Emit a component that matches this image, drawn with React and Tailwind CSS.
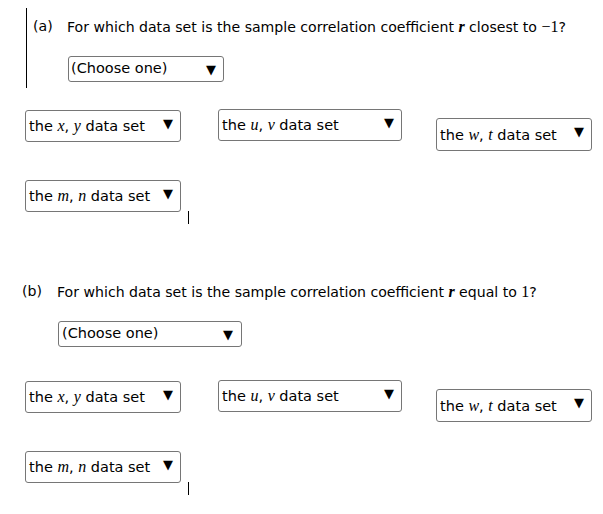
import React from "react";

const M = ({ children, bold }) => (
  <span
    className={`font-['Liberation_Serif',serif] italic text-[16px] ${bold ? "font-bold" : ""}`}
  >
    {children}
  </span>
);

const N = ({ children }) => (
  <span className="font-['Liberation_Serif',serif] text-[16px]">{children}</span>
);

const Arrow = ({ className = "" }) => (
  <span className={`text-[13px] leading-none text-black ${className}`}>▼</span>
);

const Pick = ({ w, h, arrowTop, label, className = "" }) => (
  <div
    className={`flex items-center justify-between border border-[#767676] rounded-[3px] bg-white pl-[3px] pr-[7px] ${w} ${h} ${className}`}
  >
    <span className="leading-[20px] whitespace-nowrap">{label}</span>
    <Arrow className={arrowTop ? "self-start mt-[6px]" : ""} />
  </div>
);

const Choices = () => (
  <>
    <div className="flex items-start">
      <Pick
        w="w-[156px]"
        h="h-[32px]"
        arrowTop
        className="mt-[1px]"
        label={
          <>
            the <M>x</M>, <M>y</M> data set
          </>
        }
      />
      <Pick
        w="w-[184px]"
        h="h-[32px]"
        arrowTop
        className="ml-[37px]"
        label={
          <>
            the <M>u</M>, <M>v</M> data set
          </>
        }
      />
      <Pick
        w="w-[156px]"
        h="h-[33px]"
        arrowTop
        className="ml-[34px] mt-[9px]"
        label={
          <>
            the <M>w</M>, <M>t</M> data set
          </>
        }
      />
    </div>
    <div className="flex items-end mt-[29px]">
      <Pick
        w="w-[156px]"
        h="h-[32px]"
        arrowTop
        label={
          <>
            the <M>m</M>, <M>n</M> data set
          </>
        }
      />
      <div className="w-px h-[13px] bg-black ml-[7px] -mb-[12px]" />
    </div>
  </>
);

export default function App() {
  return (
    <div className="w-[603px] h-[514px] bg-white text-black text-[14.5px] font-['DejaVu_Sans',sans-serif] overflow-hidden">
      {/* part a */}
      <div className="ml-[26px] mt-[8px] h-[80px] border-l border-black pl-[6px] pt-[8px]">
        <div className="flex items-center h-[22px] text-[14.1px]">
          <span className="w-[34px]">(a)</span>
          <span>
            For which data set is the sample correlation coefficient <M bold>r</M> closest to{" "}
            <N>−1</N>?
          </span>
        </div>
        <div className="ml-[35px] mt-[18px] w-[156px] h-[26px] flex items-center justify-between border border-[#767676] rounded-[3px] pl-[2px] pr-[7px]">
          <span>(Choose one)</span>
          <Arrow />
        </div>
      </div>

      <div className="ml-[25px] mt-[21px]">
        <Choices />
      </div>

      {/* part b */}
      <div className="ml-[22px] mt-[69px]">
        <div className="flex items-center h-[22px] text-[14.1px]">
          <span className="w-[35px]">(b)</span>
          <span>
            For which data set is the sample correlation coefficient <M bold>r</M> equal to{" "}
            <N>1</N>?
          </span>
        </div>
        <div className="ml-[36px] mt-[18px] w-[184px] h-[26px] flex items-center justify-between border border-[#767676] rounded-[3px] pl-[3px] pr-[8px]">
          <span>(Choose one)</span>
          <Arrow />
        </div>
      </div>

      <div className="ml-[25px] mt-[33px]">
        <Choices />
      </div>
    </div>
  );
}
